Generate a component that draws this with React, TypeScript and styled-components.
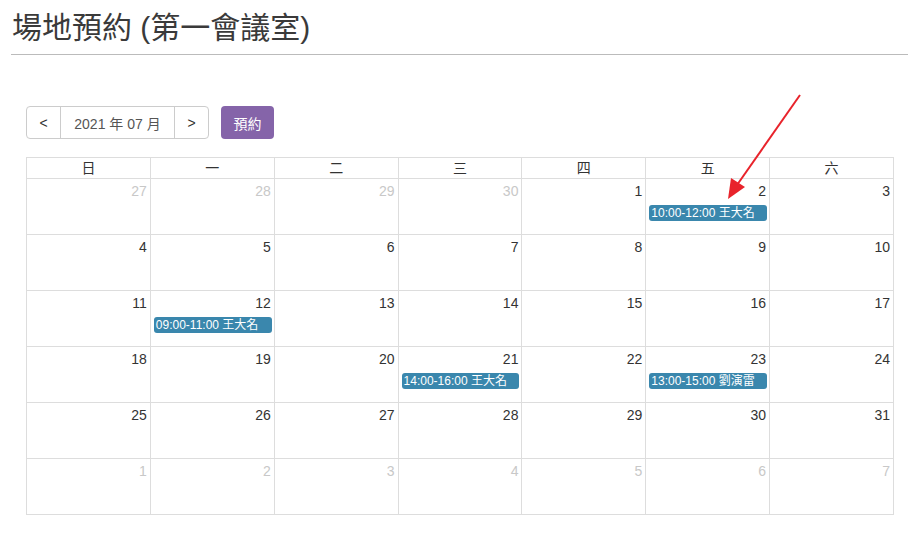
import styled, { createGlobalStyle } from "styled-components";

type Day = { num: number; muted?: boolean; event?: string };

const weekNames = ["日", "一", "二", "三", "四", "五", "六"];

const events: Record<number, string> = {
  2: "10:00-12:00 王大名",
  12: "09:00-11:00 王大名",
  21: "14:00-16:00 王大名",
  23: "13:00-15:00 劉演雷",
};

const buildDays = (): Day[] => {
  const days: Day[] = [];
  [27, 28, 29, 30].forEach((n) => days.push({ num: n, muted: true }));
  for (let n = 1; n <= 31; n++) days.push({ num: n, event: events[n] });
  for (let n = 1; n <= 7; n++) days.push({ num: n, muted: true });
  return days;
};

const App = () => {
  const days = buildDays();
  return (
    <Page>
      <GlobalStyle />
      <Title>場地預約 (第一會議室)</Title>
      <Toolbar>
        <ButtonGroup>
          <NavButton>&lt;</NavButton>
          <MonthLabel>2021 年 07 月</MonthLabel>
          <NavButton>&gt;</NavButton>
        </ButtonGroup>
        <BookButton>預約</BookButton>
      </Toolbar>
      <Calendar>
        {weekNames.map((w) => (
          <HeadCell key={w}>{w}</HeadCell>
        ))}
        {days.map((d, i) => (
          <DayCell key={i}>
            <DayNum muted={!!d.muted}>{d.num}</DayNum>
            {d.event && <Event>{d.event}</Event>}
          </DayCell>
        ))}
      </Calendar>
      <Arrow width="90" height="120" viewBox="0 0 90 120">
        <line x1="82" y1="6" x2="19" y2="96" stroke="#e8232b" strokeWidth="2" />
        <polygon points="10,110 13,89 27,98" fill="#e8232b" />
      </Arrow>
    </Page>
  );
};

const GlobalStyle = createGlobalStyle`
  body {
    margin: 0;
    background: #fff;
    font-family: "Liberation Sans", "Noto Sans CJK TC", sans-serif;
    color: #333;
  }
`;

const Page = styled.div`
  position: relative;
  padding: 0 10px 0 11px;
`;

const Title = styled.h1`
  margin: 0;
  padding: 11px 0 9px 1px;
  font-size: 30px;
  font-weight: 400;
  line-height: 34px;
  color: #3a3a3a;
  border-bottom: 1px solid #bbb;
`;

const Toolbar = styled.div`
  display: flex;
  align-items: center;
  gap: 12px;
  margin: 51px 0 0 15px;
`;

const ButtonGroup = styled.div`
  display: flex;
  height: 33px;
  border: 1px solid #ccc;
  border-radius: 4px;
  box-sizing: border-box;
`;

const NavButton = styled.div`
  width: 33px;
  display: flex;
  align-items: center;
  justify-content: center;
  font-size: 14px;
  color: #333;
`;

const MonthLabel = styled.div`
  width: 113px;
  display: flex;
  align-items: center;
  justify-content: center;
  font-size: 14px;
  color: #555;
  border-left: 1px solid #ccc;
  border-right: 1px solid #ccc;
`;

const BookButton = styled.div`
  width: 53px;
  height: 33px;
  display: flex;
  align-items: center;
  justify-content: center;
  background: #8564a9;
  color: #fff;
  font-size: 14px;
  border-radius: 4px;
`;

const Calendar = styled.div`
  display: grid;
  grid-template-columns: repeat(7, 1fr);
  width: 868px;
  margin: 18px 0 0 15px;
  border-top: 1px solid #ddd;
  border-left: 1px solid #ddd;
  box-sizing: border-box;
`;

const HeadCell = styled.div`
  height: 20px;
  line-height: 20px;
  text-align: center;
  font-size: 14px;
  color: #333;
  border-right: 1px solid #ddd;
  border-bottom: 1px solid #ddd;
`;

const DayCell = styled.div`
  height: 53px;
  padding: 2px 2px 0 2px;
  box-sizing: content-box;
  display: flex;
  flex-direction: column;
  border-right: 1px solid #ddd;
  border-bottom: 1px solid #ddd;
  overflow: hidden;
`;

const DayNum = styled.div<{ muted: boolean }>`
  text-align: right;
  padding-right: 1px;
  font-size: 14px;
  line-height: 20px;
  color: ${(p) => (p.muted ? "#c8c8c8" : "#333")};
`;

const Event = styled.div`
  margin: 4px 0 0 1px;
  height: 16px;
  line-height: 16px;
  padding: 0 2px;
  background: #3a87ad;
  border-radius: 3px;
  color: #fff;
  font-size: 12px;
  font-weight: 400;
  white-space: nowrap;
`;

const Arrow = styled.svg`
  position: absolute;
  left: 718px;
  top: 89px;
  pointer-events: none;
`;

export default App;
